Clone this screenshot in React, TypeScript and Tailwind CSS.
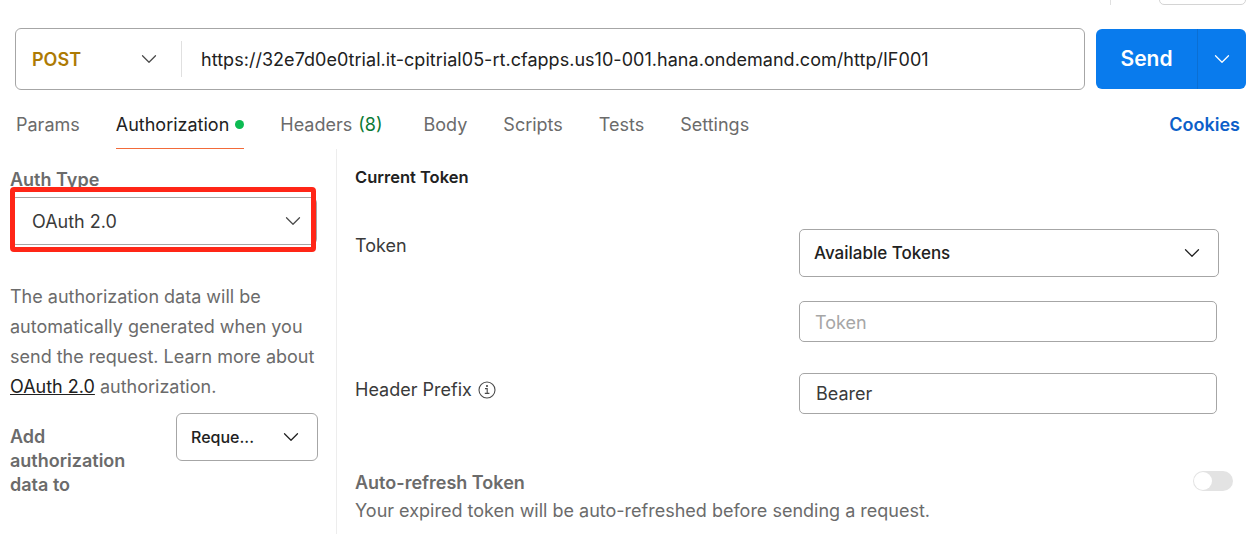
import { ChevronDown } from 'lucide-react';

const tabs = ['Params', 'Authorization', 'Headers', 'Body', 'Scripts', 'Tests', 'Settings'];

function Chevron({ className }: { className: string }) {
  return <ChevronDown size={26} strokeWidth={1.15} className={className} />;
}

function InfoIcon() {
  return (
    <svg width="18" height="18" viewBox="0 0 18 18" fill="none" stroke="#4a4a4a" strokeWidth="1.1">
      <circle cx="9" cy="9" r="8" />
      <path d="M7 7.6h2.2v4.6M6.8 12.4h4.6" />
      <circle cx="9" cy="5" r="0.5" fill="#4a4a4a" />
    </svg>
  );
}

function RequestBar() {
  return (
    <div className="flex h-[62px] gap-[11px] pl-[15px] pr-[5px]">
      <div className="flex h-[62px] w-[1070px] items-center rounded-[6px] border border-[#a6a6a6]">
        <div className="flex h-[36px] w-[166px] items-center justify-between border-r border-[#e0e0e0] pl-[16px] pr-[19px]">
          <span className="text-[18px] font-semibold text-[#ad7a03]">POST</span>
          <Chevron className="text-[#4a4a4a]" />
        </div>
        <span className="pl-[19px] text-[18px] tracking-[0.035px] text-[#212121]">
          https://32e7d0e0trial.it-cpitrial05-rt.cfapps.us10-001.hana.ondemand.com/http/IF001
        </span>
      </div>
      <div className="mt-[1px] flex h-[60px] w-[150px] rounded-[6px] bg-[#097bed] text-white">
        <div className="flex w-[102px] items-center justify-center border-r border-[#0a6fd4] text-[21px] font-semibold">
          Send
        </div>
        <div className="flex flex-1 items-center justify-center">
          <Chevron className="text-white" />
        </div>
      </div>
    </div>
  );
}

function TabBar() {
  return (
    <div className="mt-[17px] flex h-[42px] items-start justify-between pl-[16px] pr-[11px] text-[18px]">
      <div className="flex gap-[36px]">
        {tabs.map((tab) => (
          <div
            key={tab}
            className={
              tab === 'Authorization'
                ? 'flex h-[42px] items-start gap-[6px] border-b border-[#f26b3a] leading-[36px] text-[#212121]'
                : tab === 'Headers'
                  ? 'h-[42px] pr-[5px] leading-[36px] text-[#6b6b6b]'
                  : 'h-[42px] leading-[36px] text-[#6b6b6b]'
            }
          >
            {tab}
            {tab === 'Authorization' && <span className="mt-[13px] h-[9px] w-[9px] rounded-full bg-[#0cbb52]" />}
            {tab === 'Headers' && <span className="ml-[6px] text-[#0b7a35]">(8)</span>}
          </div>
        ))}
      </div>
      <span className="font-semibold leading-[36px] text-[#0d5fc9]">Cookies</span>
    </div>
  );
}

function AuthPanel() {
  return (
    <div className="relative h-[385px] w-[337px] shrink-0 border-r border-[#ededed] pl-[10px] pr-[19px]">
      <div className="pt-[19px] text-[18px] font-semibold leading-[24px] text-[#6b6b6b]">Auth Type</div>
      <div className="mt-[5px] flex h-[48px] items-center justify-between rounded-[6px] border border-[#a6a6a6] pl-[21px] pr-[10px] text-[18px] text-[#3a3a3a]">
        OAuth 2.0
        <Chevron className="text-[#4a4a4a]" />
      </div>
      <div className="absolute left-[10px] top-[38px] h-[65px] w-[306px] rounded-[4px] border-[5px] border-[#ff2617]" />
      <p className="mt-[37px] text-[18px] leading-[30px] text-[#6b6b6b]">
        The authorization data will be automatically generated when you send the request. Learn more about{' '}
        <span className="text-[#212121] underline">OAuth 2.0</span> authorization.
      </p>
      <div className="mt-[11px] flex justify-between">
        <div className="w-[130px] pt-[12px] text-[18px] font-semibold leading-[24px] text-[#6b6b6b]">
          Add authorization data to
        </div>
        <div className="mr-[-1px] flex h-[48px] w-[142px] items-center justify-between rounded-[6px] border border-[#a6a6a6] pl-[14px] pr-[13px] text-[16px] font-medium text-[#212121]">
          Reque...
          <Chevron className="text-[#212121]" />
        </div>
      </div>
    </div>
  );
}

function TokenPanel() {
  return (
    <div className="flex-1 pl-[18px] pr-[18px] text-[18px]">
      <div className="pt-[16px] text-[16.5px] font-semibold leading-[24px] text-[#212121]">Current Token</div>
      <div className="mt-[40px] flex items-start justify-between pr-[14px]">
        <span className="pt-[5px] leading-[24px] text-[#3a3a3a]">Token</span>
        <div className="w-[420px]">
          <div className="flex h-[48px] items-center justify-between rounded-[5px] border border-[#a6a6a6] pl-[14px] pr-[13px] text-[17px] font-medium text-[#212121]">
            <span className="pt-[1px]">Available Tokens</span>
            <Chevron className="text-[#212121]" />
          </div>
          <div className="mt-[24px] flex h-[41px] w-[418px] items-center rounded-[5px] border border-[#a6a6a6] pl-[15px] pt-[1px] text-[#a6a6a6]">
            Token
          </div>
        </div>
      </div>
      <div className="mt-[31px] flex items-center justify-between pr-[14px]">
        <span className="mb-[8px] flex items-center gap-[6px] text-[#3a3a3a]">
          Header Prefix
          <InfoIcon />
        </span>
        <div className="mr-[2px] flex h-[41px] w-[418px] items-center rounded-[5px] border border-[#a6a6a6] pl-[16px] text-[#3a3a3a]">
          Bearer
        </div>
      </div>
      <div className="mt-[55px] flex h-[24px] items-center justify-between">
        <span className="mt-[4px] font-semibold leading-[24px] text-[#6b6b6b]">Auto-refresh Token</span>
        <span className="flex h-[20px] w-[40px] items-center rounded-full bg-[#e3e3e3]">
          <span className="h-[18px] w-[18px] translate-x-[1px] rounded-full bg-white" />
        </span>
      </div>
      <div className="mt-[6px] leading-[24px] text-[#6b6b6b]">
        Your expired token will be auto-refreshed before sending a request.
      </div>
    </div>
  );
}

export default function App() {
  return (
    <div className="relative h-[534px] w-[1251px] overflow-hidden bg-white font-['Inter',sans-serif]">
      {/* bout de la barre du dessus, coupé par la capture */}
      <div className="absolute right-[140px] top-0 h-[5px] w-px bg-[#e0e0e0]" />
      <div className="absolute right-[5px] top-[-20px] h-[25px] w-[87px] rounded-[5px] border border-[#d4d4d4]" />
      <div className="h-[28px]" />
      <RequestBar />
      <TabBar />
      <div className="flex">
        <AuthPanel />
        <TokenPanel />
      </div>
    </div>
  );
}
